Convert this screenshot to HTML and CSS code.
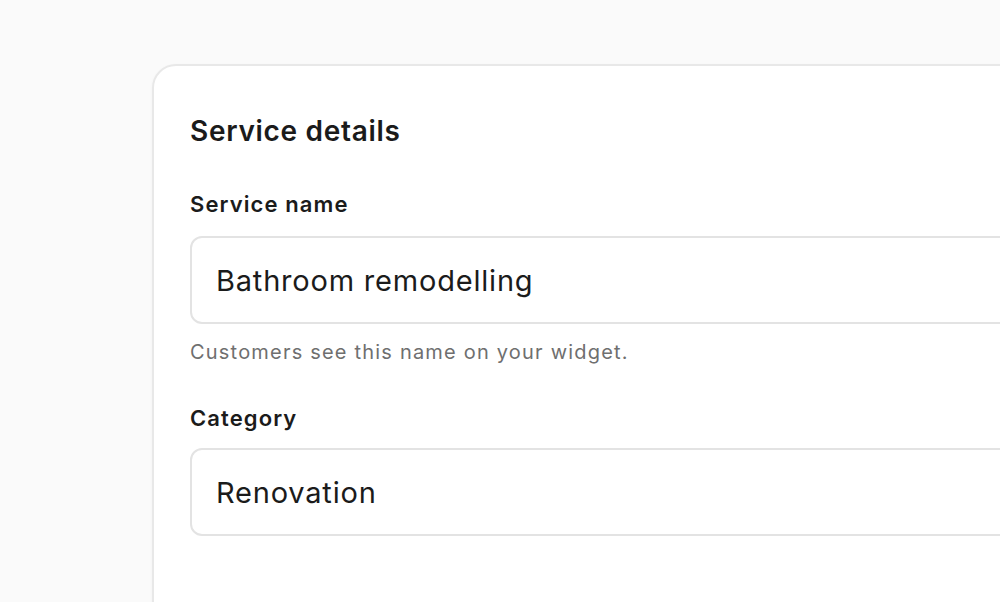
FILE: index.html
```html
<!DOCTYPE html>
<html lang="en">
<head>
<meta charset="utf-8">
<title>Service details</title>
<link rel="stylesheet" href="styles.css">
</head>
<body>
<div class="page">
  <section class="card">
    <h2 class="card-title">Service details</h2>
    <div class="field">
      <label class="field-label" for="svc-name">Service name</label>
      <div class="input" id="svc-name">Bathroom remodelling</div>
      <p class="field-help">Customers see this name on your widget.</p>
    </div>
    <div class="field field-next">
      <label class="field-label" for="svc-cat">Category</label>
      <div class="input" id="svc-cat">Renovation</div>
    </div>
  </section>
</div>
</body>
</html>
```

FILE: styles.css
```css
html, body {
  margin: 0;
  padding: 0;
  background: #fafafa;
  overflow: hidden;
  height: 602px;
}
.page {
  padding: 64px 0 0 152px;
  font-family: Inter, "Noto Sans", sans-serif;
  color: #1b1b1b;
}
.card {
  width: 1000px;
  height: 700px;
  background: #ffffff;
  border: 2px solid #e8e8e8;
  border-radius: 24px;
  box-shadow: 0 1px 3px rgba(0,0,0,0.04);
  padding: 47px 0 0 36px;
  box-sizing: border-box;
}
.card-title {
  margin: 0;
  font-size: 28px;
  line-height: 36px;
  font-weight: 600;
  letter-spacing: 0.7px;
}
.field {
  display: flex;
  flex-direction: column;
  margin-top: 41px;
}
.field-next {
  margin-top: 39px;
}
.field-label {
  font-size: 22px;
  line-height: 28px;
  font-weight: 600;
  letter-spacing: 1.1px;
}
.input {
  margin-top: 18px;
  height: 88px;
  box-sizing: border-box;
  border: 2px solid #e3e3e3;
  border-radius: 12px;
  padding: 0 24px;
  display: flex;
  align-items: center;
  font-size: 29px;
  letter-spacing: 0.8px;
  background: #fff;
}
.field-next .input {
  margin-top: 16px;
}
.field-help {
  margin: 15px 0 0;
  font-size: 20px;
  line-height: 26px;
  color: #6f6f6f;
  letter-spacing: 1.2px;
}
```
